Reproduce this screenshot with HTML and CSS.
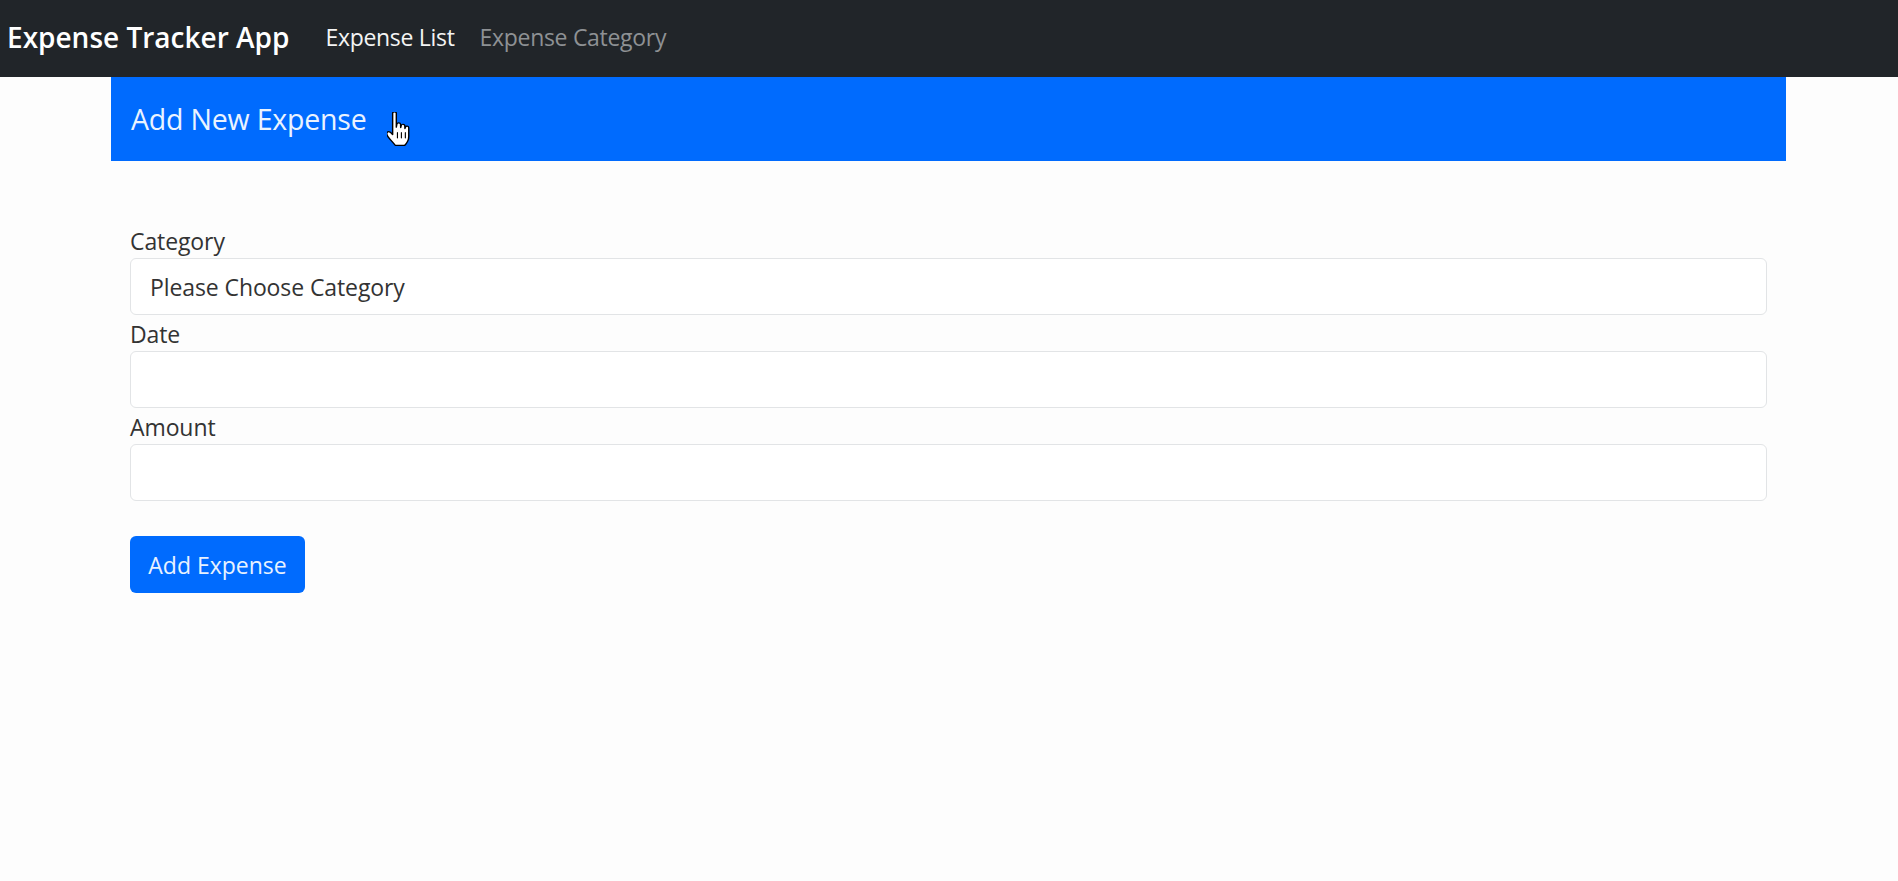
FILE: index.html
```html
<!DOCTYPE html>
<html>
<head>
<meta charset="utf-8">
<link rel="stylesheet" href="styles.css">
</head>
<body>
<nav class="navbar">
  <span class="brand">Expense Tracker App</span>
  <a class="nav-link active">Expense List</a>
  <a class="nav-link">Expense Category</a>
</nav>
<main class="card">
  <div class="card-header">
    <span class="title">Add New Expense</span>
    <svg class="cursor" width="24" height="36" viewBox="3 2.5 17 29" preserveAspectRatio="none">
      <path d="M7 3.5c0-1.4 2.6-1.4 2.6 0v11.2l0.4-2.4c0.2-1.3 2.5-1.3 2.6 0.1l0.1 2.6 0.4-1.8c0.3-1.2 2.4-1.1 2.5 0.3l0.1 2.3 0.4-1.2c0.4-1.1 2.3-0.8 2.3 0.5v7.2c0 3-1.2 5.2-2.8 7H8.8c-1.2-1.8-3.3-4.2-5-6.8-1.1-1.7-1.4-3.4-0.2-4 1-0.5 2.1 0.3 3.4 2.2V3.5z" fill="#fff" stroke="#000" stroke-width="1" stroke-linejoin="round"/>
      <path d="M10.4 19v4.5M13.2 19v4.5M16 19v4.5" stroke="#000" stroke-width="0.8" stroke-linecap="round"/>
    </svg>
  </div>
  <form class="card-body">
    <label class="label">Category</label>
    <div class="control">Please Choose Category</div>
    <label class="label">Date</label>
    <div class="control"></div>
    <label class="label">Amount</label>
    <div class="control"></div>
    <button type="button" class="btn">Add Expense</button>
  </form>
</main>
</body>
</html>
```
FILE: styles.css
```css
* { box-sizing: border-box; }
html, body { margin: 0; padding: 0; background: #fdfdfd; }
body { font-family: "Open Sans", "Noto Sans", sans-serif; color: #212529; }

.navbar {
  height: 77px;
  background: #212529;
  display: flex;
  align-items: center;
  padding-left: 7px;
  padding-bottom: 4px;
}
.brand {
  font-size: 28px;
  font-weight: 600;
  color: #fff;
  margin-right: 36px;
  letter-spacing: 0;
}
.nav-link {
  font-size: 23px;
  color: #8e9194;
  margin-right: 25px;
  letter-spacing: -0.3px;
}
.nav-link.active { color: #f4f4f4; }

.card {
  margin-left: 111px;
  width: 1675px;
}
.card-header {
  position: relative;
  height: 84px;
  background: #006bfe;
  color: #eaf3ff;
  display: flex;
  align-items: center;
  padding-left: 20px;
}
.title {
  font-size: 28.5px;
  letter-spacing: -0.2px;
}
.cursor {
  position: absolute;
  left: 276px;
  top: 35px;
}
.card-body {
  display: flex;
  flex-direction: column;
  align-items: flex-start;
  padding: 64px 19px 0 19px;
}
.label {
  font-size: 23px;
  line-height: 33px;
  color: #333;
  letter-spacing: -0.1px;
}
.control {
  width: 100%;
  height: 57px;
  border: 1.5px solid #e2e4e6;
  border-radius: 6px;
  background: #fff;
  font-size: 23px;
  color: #333;
  display: flex;
  align-items: center;
  padding-left: 19px;
  letter-spacing: -0.1px;
  margin-bottom: 3px;
}
.btn {
  margin-top: 32px;
  height: 57px;
  width: 175px;
  border: none;
  border-radius: 6px;
  background: #006bfe;
  color: #e8f2ff;
  font-family: inherit;
  font-size: 23px;
  letter-spacing: 0;
  padding: 0;
}
```
